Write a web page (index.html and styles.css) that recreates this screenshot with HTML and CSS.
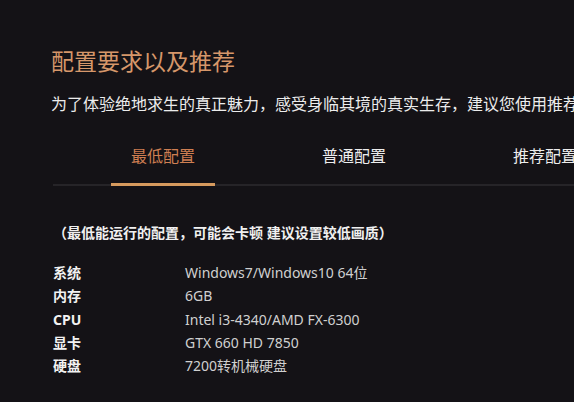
FILE: index.html
```html
<!DOCTYPE html>
<html lang="zh-CN">
<head>
  <meta charset="UTF-8">
  <meta name="viewport" content="width=device-width, initial-scale=1.0">
  <title>配置要求以及推荐</title>
  <link rel="stylesheet" href="styles.css">
</head>
<body>
  <div class="container">
    <h1>配置要求以及推荐</h1>
    <p class="intro">为了体验绝地求生的真正魅力，感受身临其境的真实生存，建议您使用推荐配置</p>

    <div class="tabs">
      <div class="tab active">最低配置</div>
      <div class="tab">普通配置</div>
      <div class="tab">推荐配置</div>
    </div>

    <p class="note">（最低能运行的配置，可能会卡顿 建议设置较低画质）</p>

    <ul class="specs">
      <li><span class="label">系统</span><span class="value">Windows7/Windows10 64位</span></li>
      <li><span class="label">内存</span><span class="value">6GB</span></li>
      <li><span class="label">CPU</span><span class="value">Intel i3-4340/AMD FX-6300</span></li>
      <li><span class="label">显卡</span><span class="value">GTX 660 HD 7850</span></li>
      <li><span class="label">硬盘</span><span class="value">7200转机械硬盘</span></li>
    </ul>
  </div>
</body>
</html>
```

FILE: styles.css
```css
* {
  box-sizing: border-box;
  margin: 0;
  padding: 0;
  font-family: "Noto Sans", "Noto Sans CJK SC", sans-serif;
}

body {
  background-color: #141216;
  color: #e6e6e6;
  overflow: hidden;
}

.container {
  padding: 46px 0 0 51px;
  white-space: nowrap;
}

h1 {
  font-size: 23px;
  font-weight: 400;
  color: #d6976a;
  line-height: 30px;
}

.intro {
  margin-top: 17px;
  font-size: 16px;
  line-height: 22px;
  color: #ececec;
}

.tabs {
  display: flex;
  gap: 87px;
  margin: 30px 0 0 2px;
  padding-left: 58px;
  border-bottom: 2px solid #262428;
}

.tab {
  width: 104px;
  flex-shrink: 0;
  text-align: center;
  font-size: 16px;
  line-height: 22px;
  padding-bottom: 16px;
  color: #ededed;
  margin-bottom: -2px;
  border-bottom: 3px solid transparent;
}

.tab.active {
  color: #cf7f52;
  border-bottom-color: #d69a5e;
}

.note {
  margin: 37px 0 0 2px;
  font-size: 14px;
  font-weight: 700;
  line-height: 20px;
  color: #f0f0f0;
}

.specs {
  list-style: none;
  margin-top: 18px;
  padding-left: 2px;
}

.specs li {
  display: flex;
  font-size: 14px;
  line-height: 23.3px;
}

.label {
  width: 132px;
  font-weight: 700;
  color: #f2f2f2;
}

.value {
  color: #d0d0d0;
}
```
